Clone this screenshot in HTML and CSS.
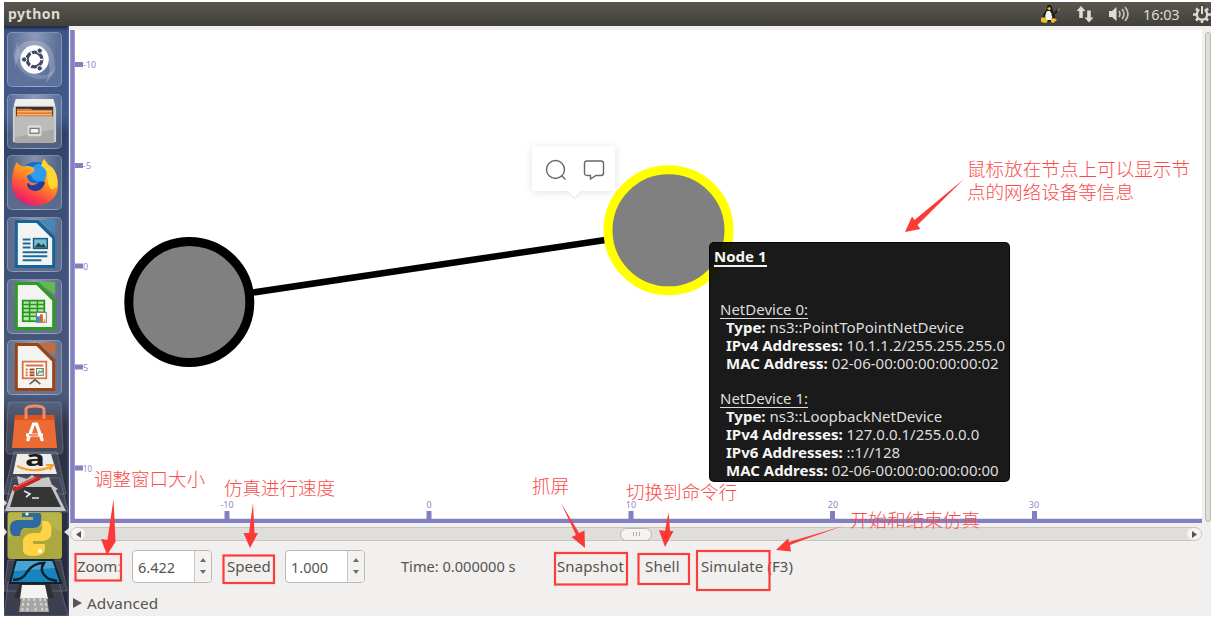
FILE: index.html
```
<!DOCTYPE html>
<html lang="zh-CN">
<head>
<meta charset="utf-8">
<title>python</title>
<link rel="stylesheet" href="styles.css">
</head>
<body>
<div class="screen">
  <header class="topbar">
    <span class="app-title">python</span>
    <div class="tray">
      <svg class="tux" width="20" height="20" viewBox="0 0 20 20">
        <path d="M7 2Q10-1 12 3Q12 6 14 10Q16 14 14 17L5 18Q1 13 5 8Q7 6 7 2Z" fill="#17191a"/>
        <path d="M7 7L10 7Q14 12 11 16L6 16Q4 12 7 7Z" fill="#f3f3ef"/>
        <path d="M7 4L10 3L11 5L9 6.500Z" fill="#f5b719"/>
        <path d="M1 14L4 13L8 17L6 19L1 18ZM11 15L14 14L17 16L13 19L11 18Z" fill="#f5bd23"/>
        <path d="M12 12L18 6" stroke="#24201c" stroke-width="2"/><path d="M17.500 7L20 4.500" stroke="#bd6a31" stroke-width="1.500"/>
      </svg>
      <svg class="net" width="18" height="18" viewBox="0 0 18 18" fill="#dfdbd2"><path d="M5 1L9.500 6H6.800V13H3.200V6H.5Z"/><path d="M13 17.500L8.500 12.500H11.200V5.500H14.800V12.500H17.500Z"/></svg>
      <svg class="vol" width="22" height="16" viewBox="0 0 22 16"><path d="M1 5H4L8.500 1V15L4 11H1Z" fill="#dfdbd2"/><path d="M11 5Q13 8 11 11M14 3Q18 8 14 13M17 1Q23 8 17 15" fill="none" stroke="#c5c2ba" stroke-width="1.700"/></svg>
      <span class="clock">16:03</span>
      <svg class="gear" width="18" height="18" viewBox="0 0 18 18" fill="none" stroke="#dfdbd2"><circle cx="9" cy="9.500" r="5.200" stroke-width="2.300"/><path d="M3 3.500L5 5.500M0 9.500H4M3 15.500L5 13.500M9 15V18M15 15.500L13 13.500M14 9.500H18M15 3.500L13 5.500" stroke-width="2.500"/><path d="M9 0V9" stroke="#484640" stroke-width="5"/><path d="M9 1V9" stroke-width="2"/></svg>
    </div>
  </header>
  <div class="desktop">
    <nav class="launcher">
      <div class="tile"><svg viewBox="0 0 54 54">
        <path d="M7 27Q7 9 24 8Q43 7 47 25Q51 40 38 51Q46 37 39 25Q30 13 17 20Q8 25 7 38Z" fill="#fff" opacity=".2"/>
        <path d="M10 8Q12 31 30 42Q42 46 49 33Q47 48 30 47Q10 43 5 22Z" fill="#fff" opacity=".16"/>
        <circle cx="27" cy="27" r="14.500" fill="#fff"/>
        <circle cx="27" cy="27" r="7.500" fill="none" stroke="#3e4967" stroke-width="3.400"/>
        <path d="M27 27L36 27M27 27L23 19M27 27L22 35" stroke="#fff" stroke-width="1.500"/>
        <g fill="#3e4967" stroke="#fff"><circle cx="16.500" cy="27" r="2.700"/><circle cx="32.300" cy="18" r="2.700"/><circle cx="32.300" cy="36" r="2.700"/></g></svg></div>
      <div class="tile"><svg viewBox="0 0 54 54">
        <path d="M8 4H46L49 14V48H5V14Z" fill="#cfcfcd"/><path d="M8 4H46L48 11H6Z" fill="#efefed"/>
        <rect x="8" y="12" width="38" height="12" fill="#34302d"/>
        <path d="M9 14H23L25 15H45V24H9Z" fill="#e37c36"/><path d="M9 17H45M9 20H45" stroke="#f7b277" stroke-width="1.200"/>
        <path d="M7 22H47V49H7Z" fill="#a9a9a8"/><path d="M7 22H47V35L7 43Z" fill="#bcbcbb"/>
        <rect x="20" y="31" width="14" height="11" rx="2" fill="#dededc"/><rect x="22.500" y="34" width="9" height="5" fill="#f4f4f4" stroke="#777" stroke-width="1.300"/></svg></div>
      <div class="tile"><svg viewBox="0 0 54 54">
        <defs><linearGradient id="fox" x1=".75" y1="0" x2=".25" y2=".9"><stop offset="0" stop-color="#ffe44a"/><stop offset=".45" stop-color="#ff9420"/><stop offset=".8" stop-color="#fd4047"/><stop offset="1" stop-color="#e81e73"/></linearGradient></defs>
        <circle cx="28" cy="24" r="18" fill="#176bd2"/><circle cx="32" cy="17" r="9" fill="#2d9df2"/>
        <path d="M9 6Q12 12 20 10Q28 11 27 15Q24 19 19 20Q20 28 30 28Q37 28 38 23Q42 14 34 10Q35 5 37 3Q39 8 45 12Q51 18 51 30Q50 49 27 51Q5 48 4 28Q4 14 9 6Z" fill="url(#fox)"/>
        <path d="M37 3Q39 8 45 12Q51 18 50 30Q43 40 40 24Q42 15 34 10Q35 5 37 3Z" fill="#ffd72f"/>
        <path d="M20 27Q24 32 30 28Q33 25 38 27Q34 38 24 35Q18 32 20 27Z" fill="#223c9b"/></svg></div>
      <div class="tile"><svg viewBox="0 0 54 54">
        <path d="M7 2H31L48 19V51H7Z" fill="#15659a"/><path d="M10 5H29L45 21V48H10Z" fill="#f3f3f2"/><path d="M31 2H48V15Z" fill="#4189b7"/>
        <path d="M15 22H23M15 26H23M15 30H23M15 35H40M15 39H40M15 43H34" stroke="#1b6b99" stroke-width="2"/>
        <rect x="26" y="21" width="14" height="10" fill="#76bdd5" stroke="#175c84" stroke-width="1.500"/><path d="M27 30L31 25L34 28L36 26L39 30Z" fill="#343f42"/></svg></div>
      <div class="tile"><svg viewBox="0 0 54 54">
        <path d="M7 2H31L48 19V51H7Z" fill="#2b9c20"/><path d="M10 5H29L45 21V48H10Z" fill="#f3f3f2"/><path d="M31 2H48V15Z" fill="#62b94e"/>
        <rect x="15" y="21" width="22" height="21" fill="#b6e6a8" stroke="#269522" stroke-width="1.800"/><path d="M15 25H37M15 29H37M15 33H37M15 37H37M22 21V42M30 21V42" stroke="#269522" stroke-width="1.600"/>
        <rect x="29" y="33" width="10" height="10" fill="#fff" stroke="#777"/><path d="M31 37V43" stroke="#2792dc" stroke-width="3"/><path d="M34 35V43" stroke="#d86527" stroke-width="3"/><path d="M37 40V43" stroke="#eab72c" stroke-width="2"/></svg></div>
      <div class="tile"><svg viewBox="0 0 54 54">
        <path d="M7 2H31L48 19V51H7Z" fill="#9c4312"/><path d="M10 5H29L45 21V48H10Z" fill="#f3f3f2"/><path d="M31 2H48V15Z" fill="#c76b3b"/>
        <path d="M27 38V40L22 44M27 39L33 44" fill="none" stroke="#666" stroke-width="1.800"/>
        <rect x="15" y="21" width="24" height="17" fill="#fff" stroke="#d57343" stroke-width="1.800"/><path d="M18 25H36M18 29H20M18 32H20M18 35H20" stroke="#d57343" stroke-width="2"/><path d="M22 29H27M22 32H27M22 35H27" stroke="#a74b1e" stroke-width="2"/><rect x="29" y="28" width="7" height="7" fill="#eee" stroke="#777"/><path d="M30 34L32 31L34 32L36 29" fill="none" stroke="#4ab64f" stroke-width="1.500"/></svg></div>
      <svg class="stack" width="65" height="216" viewBox="4 400 65 216">
        <g fill="#a3adbd" fill-opacity=".18" stroke="#a2a9b5" stroke-opacity=".35">
          <path d="M10 402H59Q61 402 61 404L63 449Q63 454 59 454H10Q6 454 6 449L8 405Q8 402 10 402Z"/>
          <path d="M14 452H57L66 494H4ZM12 478H60L68 512H4ZM8 560H61L67 591H4ZM8 582H59L68 616H4Z"/>
        </g>
        <path d="M15 415H54L57 448H12Z" fill="#ed6a32"/><path d="M15 415H54L54.500 420H14.500Z" fill="#d95321"/>
        <path d="M26 419V409Q27 406 35 406Q43 406 44 409V419" fill="none" stroke="#ef8c60" stroke-width="3"/>
        <path d="M27.500 441L33.500 424H36.500L42.500 441M26 435H43" fill="none" stroke="#fff" stroke-width="3.200"/><path d="M29 435H38" stroke="#ed6a32" stroke-width="1.500"/>
        <path d="M17 454H51L57 474H13Z" fill="#eeecea"/>
        <text x="25" y="466" class="amazon-a" textLength="20" lengthAdjust="spacingAndGlyphs">a</text>
        <path d="M17 466Q33 474 51 467M46 465L53 465L50 470" fill="none" stroke="#f7a02b" stroke-width="2"/>
        <path d="M17 476L27 479L32 475L38 479L49 477L52 485L58 489L51 493L20 492Z" fill="#c8c8c6"/>
        <path d="M14 485H53L66 511H5Z" fill="#c5c5c4"/><path d="M16 487H51L61 507H10Z" fill="#343636"/><path d="M24 491L30 494L26 497M32 498H39" fill="none" stroke="#e5e5e3" stroke-width="1.600"/>
        <path d="M15 489L38 478" stroke="#be2927" stroke-width="5" stroke-linecap="round"/><path d="M16 487L36 477.500" stroke="#ee6663" stroke-width="1.300"/>
        <rect x="7.500" y="512" width="54.500" height="47" rx="3" fill="#aba842"/><path d="M8 513H61V531Q35 519 8 538Z" fill="#cbc75c" opacity=".38"/>
        <path d="M22 513H40Q42 514 41 521Q41 528 33 528H24Q20 530 20 536H14Q9 535 10 526Q11 520 18 520H33V517H22Z" fill="#2f69a4"/>
        <path d="M42 521H47Q53 523 51 536Q49 541 40 541H33V544H45V549Q45 556 33 556Q22 556 23 549V540Q25 533 34 533H40Q43 530 42 521Z" fill="#ffd343"/><circle cx="27" cy="514" r="1.600" fill="#fff"/><circle cx="40" cy="551" r="2" fill="#fff"/>
        <path d="M16 560H53L61 583H10Z" fill="#1684bd" stroke="#14202a" stroke-width="2"/><path d="M17 561H52L55 568L14 571Z" fill="#6db8dd" opacity=".6"/><path d="M13 580Q23 580 27 572Q33 563 44 563Q38 572 49 579L57 581" fill="none" stroke="#101f29" stroke-width="2.500"/>
        <path d="M19 584H50L54 598H14Z" fill="#303033"/><path d="M22 585H45L48 599H20Z" fill="#f3f3f2"/>
        <path d="M21 598H47L49 612H19Z" fill="#a5a6a4"/><path d="M24 598L22 612M29 598L27 612M34 598L36 612M40 598L43 612M45 598L47 612" stroke="#d5d5d2" stroke-width="2" stroke-dasharray="3 2"/>
        <path d="M69 528L64 532L69 536ZM4 500L7 503L4 506ZM4 528L7 532L4 536Z" fill="#e2e2e5"/>
      </svg>
    </nav>
    <main class="window">
      <div class="view">
        <svg class="canvas" width="1132" height="493" viewBox="70 30 1132 493">
          <rect x="70" y="30" width="1132" height="493" fill="#fff"/>
          <path d="M72.500 30V521H1202" fill="none" stroke="#8380c1" stroke-width="4.600"/>
          <path d="M75 64.500H83M75 165.500H83M75 266H83M75 367H83M75 468H83M227 519V511M429 519V511M631 519V511M832.500 519V511M1034.500 519V511" stroke="#8380c1" stroke-width="5"/>
          <g class="ticks"><text x="83" y="68">-10</text><text x="83" y="169">-5</text><text x="83" y="270">0</text><text x="83" y="371">5</text><text x="83" y="472" textLength="9" lengthAdjust="spacingAndGlyphs">10</text></g>
          <g class="ticks mid"><text x="227" y="508">-10</text><text x="429" y="508">0</text><text x="631" y="508">10</text><text x="833" y="508">20</text><text x="1034" y="508">30</text></g>
          <path d="M189.500 302L669 230.500" stroke="#000" stroke-width="6.500"/>
          <circle cx="189.300" cy="302" r="60.500" fill="#808080" stroke="#000" stroke-width="9"/>
          <circle cx="668.500" cy="230.300" r="60.500" fill="#808080" stroke="#ff0" stroke-width="9"/>
        </svg>
        <div class="vbar"></div>
      </div>
      <div class="hbar"><span class="step"><svg width="5" height="7"><path d="M5 0V7L0 3.500Z" fill="#555"/></svg></span><span class="thumb"><i></i><i></i><i></i></span><span class="step"><svg width="5" height="7"><path d="M0 0V7L5 3.500Z" fill="#555"/></svg></span></div>
      <div class="controls">
        <span class="lbl zoom">Zoom<span class="colon">:</span></span>
        <div class="spin"><span class="num">6.422</span><span class="arrows"><svg width="6" height="16"><path d="M0 4L3 0L6 4ZM0 12H6L3 16Z" fill="#6b6b6b"/></svg></span></div>
        <span class="lbl speed">Speed</span>
        <div class="spin"><span class="num">1.000</span><span class="arrows"><svg width="6" height="16"><path d="M0 4L3 0L6 4ZM0 12H6L3 16Z" fill="#6b6b6b"/></svg></span></div>
        <span class="lbl time">Time: 0.000000 s</span>
        <span class="lbl snap">Snapshot</span>
        <span class="lbl shell">Shell</span>
        <span class="lbl sim">Simulate (F3)</span>
      </div>
      <div class="advanced"><svg width="9" height="10"><path d="M0 0L9 5L0 10Z" fill="#555"/></svg><span>Advanced</span></div>
    </main>
  </div>

  <aside class="tooltip">
    <p class="name"><b>Node 1</b></p>
    <div class="device">
      <p><u>NetDevice 0:</u></p>
      <p class="f"><b>Type:</b> ns3::PointToPointNetDevice</p>
      <p class="f"><b>IPv4 Addresses:</b> 10.1.1.2/255.255.255.0</p>
      <p class="f"><b>MAC Address:</b> 02-06-00:00:00:00:00:02</p>
    </div>
    <div class="device">
      <p><u>NetDevice 1:</u></p>
      <p class="f"><b>Type:</b> ns3::LoopbackNetDevice</p>
      <p class="f"><b>IPv4 Addresses:</b> 127.0.0.1/255.0.0.0</p>
      <p class="f"><b>IPv6 Addresses:</b> ::1//128</p>
      <p class="f"><b>MAC Address:</b> 02-06-00:00:00:00:00:00</p>
    </div>
  </aside>

  <div class="popup">
    <svg width="22" height="22" viewBox="0 0 22 22"><circle cx="10.500" cy="10.500" r="9" /><path d="M16.500 16.500L20.500 20.500"/></svg>
    <svg width="22" height="22" viewBox="0 0 22 22"><path d="M4 2H18Q20.500 2 20.500 4.500V14Q20.500 16.500 18 16.500H13L7.500 20V16.500H4Q1.500 16.500 1.500 14V4.500Q1.500 2 4 2Z"/></svg>
  </div>

  <svg class="notes" width="1211" height="621" viewBox="0 0 1211 621">
    <g fill="none" stroke="#fd3d3c" stroke-width="2.200">
      <rect x="75.500" y="554" width="45.500" height="26.500"/><rect x="223.500" y="555.500" width="50.500" height="27.500"/>
      <rect x="555" y="553" width="72" height="31.500"/><rect x="638.500" y="554" width="50.500" height="30"/><rect x="697" y="551" width="72.500" height="39"/>
    </g>
    <g fill="#fd3936">
      <path d="M113.500 499L115.500 541L116 541L107 555L101 539L107.500 540Z"/>
      <path d="M253 503L254.500 533L258 533L250 548L243.500 533L249 533Z"/>
      <path d="M561 503L579 533L584.500 530.500L585 548L571.500 537L576 535Z"/>
      <path d="M668.500 512L670 531L673.500 531L665 547L659 530L665 531Z"/>
      <path d="M843 526L803 540L790 545L791 551.500L776 550L788 538.500L789 542Z"/>
      <path d="M964 179L917.500 225L920.500 229L905 232L912 216.500L914.500 220Z"/>
    </g>
    <g class="cn">
      <text x="967" y="176" textLength="223">鼠标放在节点上可以显示节</text><text x="967" y="199" textLength="167">点的网络设备等信息</text>
      <text x="94" y="486" textLength="111">调整窗口大小</text><text x="224" y="495" textLength="111">仿真进行速度</text>
      <text x="532" y="493" textLength="37">抓屏</text><text x="626" y="499" textLength="111">切换到命令行</text><text x="850" y="527" textLength="130">开始和结束仿真</text>
    </g>
  </svg>
</div>
</body>
</html>
```
FILE: styles.css
```
* { box-sizing: border-box; }
body { margin: 0; background: #fff; font-family: "Noto Sans", "Noto Sans CJK SC", sans-serif; }
p { margin: 0; }
svg { display: block; flex: none; }
.screen { position: relative; width: 1211px; height: 621px; padding: 2px 0 5px 4px; overflow: hidden; display: flex; flex-direction: column; }

.topbar { height: 24px; flex: none; display: flex; align-items: center; justify-content: space-between; padding-left: 4px; background: linear-gradient(#5a574e, #403f3a); color: #dfdbd2; overflow: hidden; }
.app-title { font-size: 14px; font-weight: 700; line-height: 22px; letter-spacing: .5px; }
.tray { display: flex; align-items: center; width: 171px; flex: none; }
.net { margin-left: 16px; }
.vol { margin-left: 14px; }
.clock { margin-left: 13px; width: 38px; font-size: 14.500px; line-height: 22px; letter-spacing: -.1px; }
.gear { margin-left: 12px; }

.desktop { flex: 1; min-height: 0; display: flex; }
.launcher { width: 65px; flex: none; padding: 6px 0 0 3px; overflow: hidden; background: linear-gradient(90deg, transparent 63px, rgba(90,115,165,.45) 64px), linear-gradient(#1c2841 0, #3e5486 5px, #40588a 90px, #2d4066 108px, #3b4e76 160px, #4b597d 370px, #303447 400px, #252737 590px); }
.tile { width: 55px; height: 55px; margin-bottom: 6.7px; border: 1px solid rgba(190,200,220,.4); border-radius: 5px; background: radial-gradient(ellipse at 50% 0, rgba(255,255,255,.42), rgba(255,255,255,.16) 65%); }
.tile svg { width: 53px; height: 53px; }
.stack { margin: -2.200px 0 0 -3px; }
.amazon-a { font: 700 22px "Open Sans", sans-serif; fill: #1c1c1c; }

.window { flex: 1; min-width: 0; padding: 4px 0 0 1px; background: #f1f0ee; color: #56544f; }
.view { display: flex; height: 493px; }
.vbar { width: 10px; height: 490px; margin: 2px 0 0 3px; border: 1px solid #bbb8b3; border-radius: 6px; background: #deddda; }
.ticks { font-size: 9px; fill: #8d89c5; }
.mid { text-anchor: middle; }
.hbar { width: 1132px; height: 14px; margin-top: 4px; border: 1px solid #c8c6c2; border-radius: 7px; background: #dfdedb; display: flex; align-items: center; justify-content: space-between; }
.step { width: 14px; height: 12px; border-radius: 7px; background: #f5f4f2; display: flex; align-items: center; justify-content: center; }
.thumb { width: 32px; height: 13px; border: 1px solid #bab7b2; border-radius: 7px; background: #f4f3f1; display: flex; align-items: center; justify-content: center; gap: 2px; }
.thumb i { width: 1px; height: 4px; background: #aaa; }
.controls { height: 34px; margin-top: 8px; padding-left: 7px; display: flex; align-items: center; font-size: 15px; white-space: nowrap; }
.lbl { flex: none; line-height: 34px; }
.zoom { width: 55px; letter-spacing: -.2px; }
.colon { opacity: .4; }
.speed { width: 58px; }
.spin { width: 80px; height: 33px; margin-right: 15px; flex: none; display: flex; border: 1px solid #bcb9b4; border-radius: 4px; background: #fff; }
.num { flex: 1; padding-left: 5px; line-height: 33px; font-size: 14.500px; }
.arrows { width: 17px; border-left: 1px solid #c8c5c0; border-radius: 0 3px 3px 0; background: #f3f2f0; display: flex; align-items: center; justify-content: center; }
.time { width: 156px; margin-left: 21px; font-size: 14.600px; }
.snap { width: 88px; letter-spacing: .1px; }
.shell { width: 56px; letter-spacing: .2px; }
.sim { letter-spacing: .1px; }
.advanced { display: flex; align-items: center; gap: 5px; height: 34px; margin-top: 3px; padding-left: 3px; font-size: 15.300px; letter-spacing: .1px; }

.tooltip { position: absolute; left: 709px; top: 242px; width: 301px; height: 240px; padding: 5px 4px 0 4px; border: 1px solid rgba(0,0,0,.8); border-radius: 5px; background: rgba(12,12,12,.94); color: #dededc; font-size: 15px; line-height: 17.850px; white-space: nowrap; }
.tooltip b { color: #f6f6f4; }
.tooltip u { text-underline-offset: 3px; }
.name b { display: inline-block; height: 19px; border-bottom: 2px solid #f2f2f0; }
.name { height: 53px; }
.device { padding-left: 6px; margin-bottom: 17.850px; }
.f { padding-left: 6px; }

.popup { position: absolute; left: 532px; top: 146px; width: 83px; height: 45px; padding: 3px 10px 0 13px; border-radius: 3px; background: #fff; box-shadow: 0 1px 8px rgba(0,0,0,.12); display: flex; align-items: center; justify-content: space-between; }
.popup::after { content: ""; position: absolute; left: 37px; top: 40px; width: 10px; height: 10px; transform: rotate(45deg); background: #fff; border-right: 1px solid #e8e8ec; border-bottom: 1px solid #e8e8ec; }
.popup svg { fill: none; stroke: #65686b; stroke-width: 1.400; }

.notes { position: absolute; left: 0; top: 0; }
.cn { font: 300 18.600px "Noto Sans CJK SC", sans-serif; fill: #fa4b4b; }
```
